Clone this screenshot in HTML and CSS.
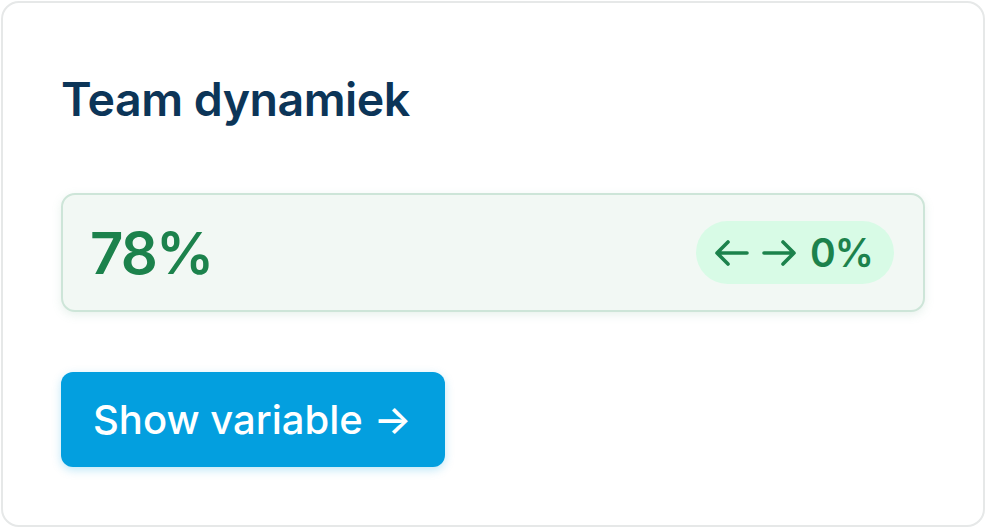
FILE: index.html
```html
<!DOCTYPE html>
<html>
<head>
<meta charset="utf-8">
<link rel="stylesheet" href="styles.css">
</head>
<body>
<div class="card">
  <h1 class="title">Team dynamiek</h1>
  <div class="stat">
    <span class="value">78%</span>
    <span class="badge">
      <svg class="arrow" width="35" height="28" viewBox="0 0 35 28"><path d="M33 14H3M14 3L3 14L14 25" fill="none" stroke="currentColor" stroke-width="3.6" stroke-linecap="round" stroke-linejoin="round"/></svg>
      <svg class="arrow" width="35" height="28" viewBox="0 0 35 28"><path d="M2 14H32M21 3L32 14L21 25" fill="none" stroke="currentColor" stroke-width="3.6" stroke-linecap="round" stroke-linejoin="round"/></svg>
      <span class="pct">0%</span>
    </span>
  </div>
  <div class="actions">
    <button class="btn">Show variable →</button>
  </div>
</div>
</body>
</html>
```
FILE: styles.css
```css
html, body { margin: 0; padding: 0; background: #ffffff; }
body { font-family: Inter, "Noto Sans", sans-serif; width: 986px; height: 528px; padding: 1px; box-sizing: border-box; }
.card {
  box-sizing: border-box;
  width: 984px; height: 526px;
  border: 2px solid #e6e8e8;
  border-radius: 18px;
  padding: 58px 58px 0 58px;
  display: flex; flex-direction: column;
  background: #fff;
}
.title {
  margin: 7px 0 0 0;
  font-size: 46.5px; font-weight: 600; line-height: 62px;
  color: #0c3558; letter-spacing: -0.5px;
}
.stat {
  margin-top: 63px;
  height: 119px; box-sizing: border-box;
  border: 2px solid #cde5d8; border-radius: 14px;
  background: #f2f8f4;
  box-shadow: 0 3px 10px rgba(120,180,150,0.18);
  display: flex; align-items: center; justify-content: space-between;
  padding: 0 29px 0 27px;
}
.value { font-size: 58px; font-weight: 600; color: #1c824c; letter-spacing: -1.8px; }
.badge {
  background: #d8fbe6; color: #1c824c;
  border-radius: 32px; height: 63px; padding: 0 21px 0 18px;
  display: flex; align-items: center; gap: 13px;
  font-size: 39px; font-weight: 600;
}
.arrow { display: block; }
.pct { letter-spacing: -1px; }
.actions { margin-top: 60px; }
.btn {
  font-family: inherit;
  background: #039fdf; color: #fff; border: none;
  border-radius: 12px;
  height: 95px; padding: 0 33px 0 32px;
  font-size: 40px; font-weight: 500;
  box-shadow: 0 3px 10px rgba(3,159,223,0.25);
  cursor: pointer;
}
```
